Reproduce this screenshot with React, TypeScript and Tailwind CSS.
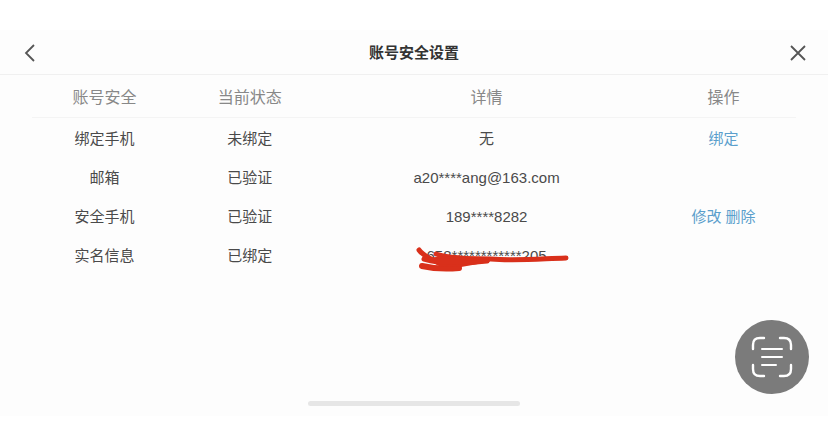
import React from 'react';

interface AccountRow {
  label: string;
  status: string;
  detail: string;
  actions: string[];
  crossedOut?: boolean;
}

const rows: AccountRow[] = [
  { label: '绑定手机', status: '未绑定', detail: '无', actions: ['绑定'] },
  { label: '邮箱', status: '已验证', detail: 'a20****ang@163.com', actions: [] },
  { label: '安全手机', status: '已验证', detail: '189****8282', actions: ['修改', '删除'] },
  { label: '实名信息', status: '已绑定', detail: '658************205', actions: [], crossedOut: true },
];

const Scribble: React.FC = () => (
  <svg
    className="absolute top-1/2 -left-3 h-8 w-[156px] -translate-y-1/2"
    viewBox="0 0 156 32"
    fill="none"
    stroke="#d9301b"
    strokeWidth="5"
    strokeLinecap="round"
    strokeLinejoin="round"
    aria-hidden="true"
  >
    <path d="M4 10 C6 13 9 15 14 18 L22 22" />
    <path d="M21 14 C33 18 50 19 76 19 C100 21 122 19 151 18" />
    <path d="M9 19 C22 23 44 24 72 21" />
    <path d="M7 26 C20 29 33 29 44 28" strokeWidth="6" />
    <path d="M14 19 L28 17 L74 21 L46 26 L24 25 Z" fill="#d9301b" strokeWidth="2" />
  </svg>
);

const App: React.FC = () => {
  return (
    <div className="min-h-screen bg-white pt-[30px] pb-2 font-['Liberation_Sans','Noto_Sans_CJK_SC',sans-serif]">
      <div className="relative flex min-h-[calc(100vh-38px)] flex-col bg-[#fdfdfd]">
        {/* Title bar */}
        <header className="flex h-[45px] items-center justify-between border-b border-[#f0f0f0] px-5 pt-0.5">
          <button type="button" aria-label="返回" className="flex h-5 w-5 items-center justify-center text-[#555]">
            <svg className="h-5 w-5" viewBox="0 0 20 20" fill="none" stroke="currentColor" strokeWidth="1.8">
              <path d="M14 2 L6 10 L14 18" />
            </svg>
          </button>
          <h1 className="text-[15px] leading-5 font-bold text-[#333]">账号安全设置</h1>
          <button type="button" aria-label="关闭" className="flex h-5 w-5 items-center justify-center text-[#555]">
            <svg className="h-5 w-5" viewBox="0 0 20 20" fill="none" stroke="currentColor" strokeWidth="1.8">
              <path d="M3 3 L17 17 M17 3 L3 17" />
            </svg>
          </button>
        </header>

        {/* Account table */}
        <main className="flex-1 px-8">
          <table className="w-full table-fixed border-collapse text-center text-[15px] leading-5 text-[#4a4a4a]">
            <thead>
              <tr className="h-[42px] border-b border-[#f4f4f4] text-base text-[#888]">
                <th className="w-[19%] pt-1 font-normal">账号安全</th>
                <th className="w-[19%] pt-1 font-normal">当前状态</th>
                <th className="w-[43%] pt-1 font-normal">详情</th>
                <th className="w-[19%] pt-1 font-normal">操作</th>
              </tr>
            </thead>
            <tbody>
              {rows.map((row) => (
                <tr key={row.label} className="h-[39px]">
                  <td className="pt-1">{row.label}</td>
                  <td className="pt-1">{row.status}</td>
                  <td className="pt-1">
                    <span className="relative inline-block">
                      {row.detail}
                      {row.crossedOut && <Scribble />}
                    </span>
                  </td>
                  <td className="pt-1">
                    <div className="flex justify-center gap-1">
                      {row.actions.map((action) => (
                        <a key={action} href="#" className="text-[#5b9fcc]">
                          {action}
                        </a>
                      ))}
                    </div>
                  </td>
                </tr>
              ))}
            </tbody>
          </table>
        </main>

        {/* Home indicator */}
        <div className="mx-auto mb-2.5 h-[5px] w-[212px] rounded-full bg-[#e6e6e6]" />

        {/* Scan button */}
        <button
          type="button"
          aria-label="扫描"
          className="absolute right-[19px] bottom-[22px] flex h-[74px] w-[74px] items-center justify-center rounded-full bg-[#7b7b7b] text-white"
        >
          <svg className="h-[42px] w-[42px]" viewBox="0 0 42 42" fill="none" stroke="currentColor" strokeWidth="2.4" strokeLinecap="round">
            <path d="M2 13 V9 Q2 2 9 2 H13 M29 2 H33 Q40 2 40 9 V13 M40 29 V33 Q40 40 33 40 H29 M13 40 H9 Q2 40 2 33 V29" />
            <path d="M11 13 H31 M11 21 H31 M11 29 H25" strokeWidth="2" />
          </svg>
        </button>
      </div>
    </div>
  );
};

export default App;
